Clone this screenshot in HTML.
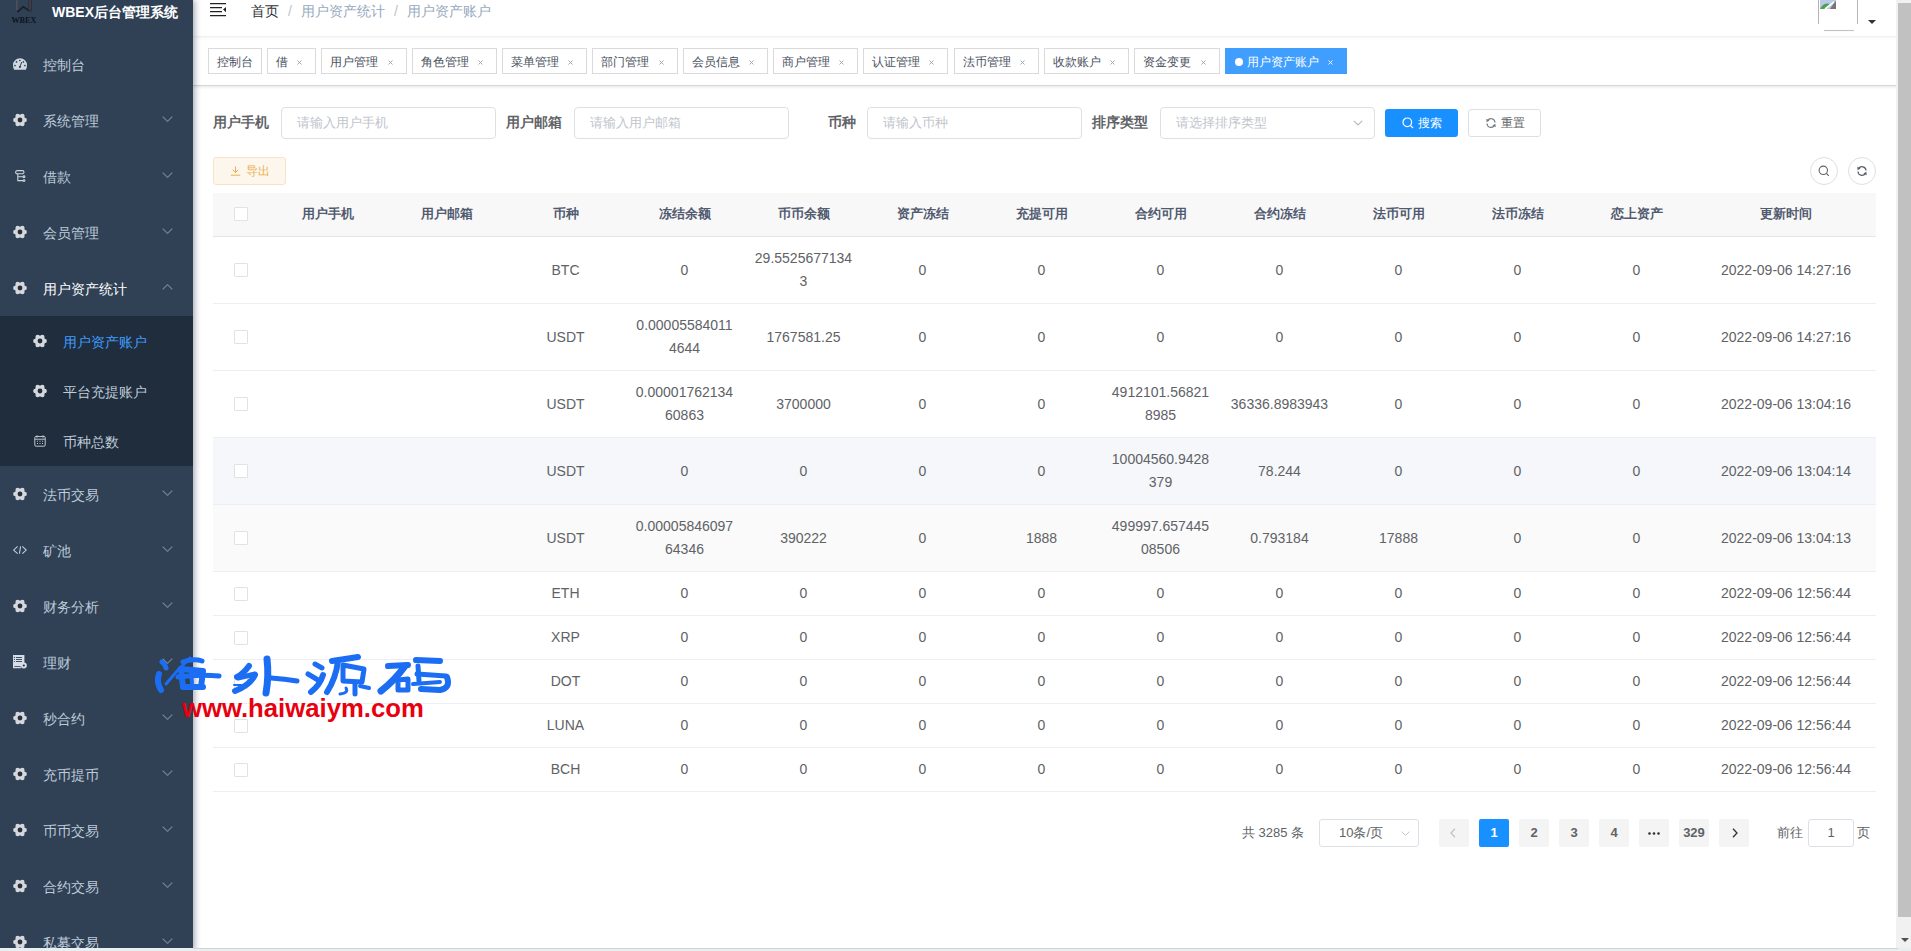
<!DOCTYPE html>
<html><head><meta charset="utf-8"><title>用户资产账户</title>
<style>
html,body{margin:0;padding:0;width:1911px;height:951px;overflow:hidden;background:#fff;font-family:"Liberation Sans", sans-serif}
*{box-sizing:content-box}
</style></head><body>
<div id="side" style="position:absolute;left:0;top:0;width:193px;height:951px;background:#304156;overflow:hidden;box-shadow:2px 0 6px rgba(0,21,41,.35);z-index:3"><svg style="position:absolute;left:10px;top:0" width="28" height="24" viewBox="0 0 28 24"><rect x="6" y="0" width="1.8" height="10" fill="#4a4e58"/><path d="M7.4 12.2 L13.3 6.8 L19.2 10.8" fill="none" stroke="#1a1e28" stroke-width="1.7"/><rect x="18.4" y="0" width="3.4" height="11.2" fill="#2b2b37"/><rect x="19.4" y="0" width="1.2" height="10" fill="#4a4650"/><text x="13.9" y="23.2" font-family="Liberation Serif" font-weight="bold" font-size="8.2" text-anchor="middle" fill="#0e1420" textLength="25" lengthAdjust="spacingAndGlyphs">WBEX</text></svg><div style="position:absolute;left:52px;top:2px;font-size:14px;font-weight:bold;color:#fff;line-height:20px;white-space:nowrap">WBEX后台管理系统</div><svg style="position:absolute;left:13px;top:58px" width="14" height="12" viewBox="0 0 14 12"><path d="M7 0.3 A7 7 0 0 0 0 7.3 Q0 10 1.2 11.7 H12.8 Q14 10 14 7.3 A7 7 0 0 0 7 0.3 Z" fill="#d0d8e2"/><g fill="#304156"><ellipse cx="2" cy="7.6" rx="0.9" ry="0.8"/><ellipse cx="3.5" cy="3.9" rx="0.8" ry="0.9"/><ellipse cx="6.9" cy="2.5" rx="0.9" ry="0.7"/><ellipse cx="10.4" cy="3.9" rx="0.8" ry="0.9"/><ellipse cx="11.9" cy="7.6" rx="0.9" ry="0.8"/><circle cx="6.9" cy="9" r="1.1"/></g><path d="M6.9 9 L8.7 4" stroke="#304156" stroke-width="1"/></svg><div style="position:absolute;left:43px;top:55px;line-height:20px;font-size:14px;color:#bfcbd9;white-space:nowrap">控制台</div><svg style="position:absolute;left:13px;top:113px" width="14" height="14" viewBox="0 0 14 14"><g fill="#d4d7dd"><circle cx="7" cy="7" r="5.3"/><circle cx="11.60" cy="7.00" r="2.3"/><circle cx="9.30" cy="10.98" r="2.3"/><circle cx="4.70" cy="10.98" r="2.3"/><circle cx="2.40" cy="7.00" r="2.3"/><circle cx="4.70" cy="3.02" r="2.3"/><circle cx="9.30" cy="3.02" r="2.3"/></g><circle cx="7" cy="7" r="2.4" fill="#2b2f3a"/></svg><div style="position:absolute;left:43px;top:111px;line-height:20px;font-size:14px;color:#bfcbd9;white-space:nowrap">系统管理</div><svg style="position:absolute;left:161.5px;top:115.5px" width="11" height="6" viewBox="0 0 11 6"><path d="M0.7 0.7 L5.5 5.3 L10.3 0.7" fill="none" stroke="#7d8793" stroke-width="1.1"/></svg><svg style="position:absolute;left:15px;top:170px" width="11" height="13" viewBox="0 0 11 13"><g fill="none" stroke="#cdd5df" stroke-width="1.1"><rect x="0.6" y="0.6" width="8.4" height="3.2" rx="1.6"/><path d="M2.8 3.8 V10.6 H8 M2.8 6.8 H8"/><circle cx="9" cy="6.8" r="0.9"/><circle cx="9" cy="10.6" r="0.9"/></g></svg><div style="position:absolute;left:43px;top:167px;line-height:20px;font-size:14px;color:#bfcbd9;white-space:nowrap">借款</div><svg style="position:absolute;left:161.5px;top:171.5px" width="11" height="6" viewBox="0 0 11 6"><path d="M0.7 0.7 L5.5 5.3 L10.3 0.7" fill="none" stroke="#7d8793" stroke-width="1.1"/></svg><svg style="position:absolute;left:13px;top:225px" width="14" height="14" viewBox="0 0 14 14"><g fill="#d4d7dd"><circle cx="7" cy="7" r="5.3"/><circle cx="11.60" cy="7.00" r="2.3"/><circle cx="9.30" cy="10.98" r="2.3"/><circle cx="4.70" cy="10.98" r="2.3"/><circle cx="2.40" cy="7.00" r="2.3"/><circle cx="4.70" cy="3.02" r="2.3"/><circle cx="9.30" cy="3.02" r="2.3"/></g><circle cx="7" cy="7" r="2.4" fill="#2b2f3a"/></svg><div style="position:absolute;left:43px;top:223px;line-height:20px;font-size:14px;color:#bfcbd9;white-space:nowrap">会员管理</div><svg style="position:absolute;left:161.5px;top:227.5px" width="11" height="6" viewBox="0 0 11 6"><path d="M0.7 0.7 L5.5 5.3 L10.3 0.7" fill="none" stroke="#7d8793" stroke-width="1.1"/></svg><svg style="position:absolute;left:13px;top:281px" width="14" height="14" viewBox="0 0 14 14"><g fill="#d4d7dd"><circle cx="7" cy="7" r="5.3"/><circle cx="11.60" cy="7.00" r="2.3"/><circle cx="9.30" cy="10.98" r="2.3"/><circle cx="4.70" cy="10.98" r="2.3"/><circle cx="2.40" cy="7.00" r="2.3"/><circle cx="4.70" cy="3.02" r="2.3"/><circle cx="9.30" cy="3.02" r="2.3"/></g><circle cx="7" cy="7" r="2.4" fill="#2b2f3a"/></svg><div style="position:absolute;left:43px;top:279px;line-height:20px;font-size:14px;color:#fff;white-space:nowrap">用户资产统计</div><svg style="position:absolute;left:161.5px;top:283.5px" width="11" height="6" viewBox="0 0 11 6"><path d="M0.7 5.3 L5.5 0.7 L10.3 5.3" fill="none" stroke="#7d8793" stroke-width="1.1"/></svg><div style="position:absolute;left:0;top:316px;width:193px;height:150px;background:#1f2d3d"></div><svg style="position:absolute;left:33px;top:334px" width="14" height="14" viewBox="0 0 14 14"><g fill="#d4d7dd"><circle cx="7" cy="7" r="5.3"/><circle cx="11.60" cy="7.00" r="2.3"/><circle cx="9.30" cy="10.98" r="2.3"/><circle cx="4.70" cy="10.98" r="2.3"/><circle cx="2.40" cy="7.00" r="2.3"/><circle cx="4.70" cy="3.02" r="2.3"/><circle cx="9.30" cy="3.02" r="2.3"/></g><circle cx="7" cy="7" r="2.4" fill="#1f2d3d"/></svg><div style="position:absolute;left:63px;top:332px;line-height:20px;font-size:14px;color:#409eff;white-space:nowrap">用户资产账户</div><svg style="position:absolute;left:33px;top:384px" width="14" height="14" viewBox="0 0 14 14"><g fill="#d4d7dd"><circle cx="7" cy="7" r="5.3"/><circle cx="11.60" cy="7.00" r="2.3"/><circle cx="9.30" cy="10.98" r="2.3"/><circle cx="4.70" cy="10.98" r="2.3"/><circle cx="2.40" cy="7.00" r="2.3"/><circle cx="4.70" cy="3.02" r="2.3"/><circle cx="9.30" cy="3.02" r="2.3"/></g><circle cx="7" cy="7" r="2.4" fill="#1f2d3d"/></svg><div style="position:absolute;left:63px;top:382px;line-height:20px;font-size:14px;color:#bfcbd9;white-space:nowrap">平台充提账户</div><svg style="position:absolute;left:34px;top:435px" width="12" height="12" viewBox="0 0 12 12"><rect x="0.8" y="1.5" width="10.4" height="9.7" rx="1" fill="none" stroke="#bfc5cf" stroke-width="1"/><path d="M0.8 4.2 h10.4 M3 0.3 v2.4 M9 0.3 v2.4" stroke="#bfc5cf" stroke-width="1"/><path d="M3 6.2 h1 M5.5 6.2 h1 M8 6.2 h1 M3 8.5 h1 M5.5 8.5 h1 M8 8.5 h1" stroke="#bfc5cf" stroke-width="1"/></svg><div style="position:absolute;left:63px;top:432px;line-height:20px;font-size:14px;color:#bfcbd9;white-space:nowrap">币种总数</div><svg style="position:absolute;left:13px;top:487px" width="14" height="14" viewBox="0 0 14 14"><g fill="#d4d7dd"><circle cx="7" cy="7" r="5.3"/><circle cx="11.60" cy="7.00" r="2.3"/><circle cx="9.30" cy="10.98" r="2.3"/><circle cx="4.70" cy="10.98" r="2.3"/><circle cx="2.40" cy="7.00" r="2.3"/><circle cx="4.70" cy="3.02" r="2.3"/><circle cx="9.30" cy="3.02" r="2.3"/></g><circle cx="7" cy="7" r="2.4" fill="#2b2f3a"/></svg><div style="position:absolute;left:43px;top:485px;line-height:20px;font-size:14px;color:#bfcbd9;white-space:nowrap">法币交易</div><svg style="position:absolute;left:161.5px;top:489.5px" width="11" height="6" viewBox="0 0 11 6"><path d="M0.7 0.7 L5.5 5.3 L10.3 0.7" fill="none" stroke="#7d8793" stroke-width="1.1"/></svg><svg style="position:absolute;left:13px;top:545px" width="14" height="10" viewBox="0 0 14 10"><path d="M4.6 1.3 L0.6 5.1 L4.6 8.7 M9.4 1.3 L13.2 5.1 L9.4 8.7 M7.6 1.3 L6.4 8.7" fill="none" stroke="#c3ccd8" stroke-width="1.1"/></svg><div style="position:absolute;left:43px;top:541px;line-height:20px;font-size:14px;color:#bfcbd9;white-space:nowrap">矿池</div><svg style="position:absolute;left:161.5px;top:545.5px" width="11" height="6" viewBox="0 0 11 6"><path d="M0.7 0.7 L5.5 5.3 L10.3 0.7" fill="none" stroke="#7d8793" stroke-width="1.1"/></svg><svg style="position:absolute;left:13px;top:599px" width="14" height="14" viewBox="0 0 14 14"><g fill="#d4d7dd"><circle cx="7" cy="7" r="5.3"/><circle cx="11.60" cy="7.00" r="2.3"/><circle cx="9.30" cy="10.98" r="2.3"/><circle cx="4.70" cy="10.98" r="2.3"/><circle cx="2.40" cy="7.00" r="2.3"/><circle cx="4.70" cy="3.02" r="2.3"/><circle cx="9.30" cy="3.02" r="2.3"/></g><circle cx="7" cy="7" r="2.4" fill="#2b2f3a"/></svg><div style="position:absolute;left:43px;top:597px;line-height:20px;font-size:14px;color:#bfcbd9;white-space:nowrap">财务分析</div><svg style="position:absolute;left:161.5px;top:601.5px" width="11" height="6" viewBox="0 0 11 6"><path d="M0.7 0.7 L5.5 5.3 L10.3 0.7" fill="none" stroke="#7d8793" stroke-width="1.1"/></svg><svg style="position:absolute;left:13px;top:655px" width="14" height="14" viewBox="0 0 14 14"><path d="M0 0 H11.4 V8.6 A3.4 3.4 0 0 0 8 13.2 H0 Z" fill="#d6dde6"/><g fill="#304156"><circle cx="1.4" cy="2.4" r="0.6"/><circle cx="1.4" cy="4.5" r="0.6"/><circle cx="1.4" cy="6.5" r="0.6"/><rect x="3" y="2" width="6" height="0.9"/><rect x="3" y="4.1" width="6" height="0.9"/><rect x="3" y="6.1" width="6" height="0.9"/><rect x="1.3" y="11" width="6.3" height="0.8"/></g><circle cx="10.8" cy="10.5" r="3" fill="#d6dde6"/><circle cx="10.8" cy="10.5" r="1.1" fill="#1f2d3d"/></svg><div style="position:absolute;left:43px;top:653px;line-height:20px;font-size:14px;color:#bfcbd9;white-space:nowrap">理财</div><svg style="position:absolute;left:161.5px;top:657.5px" width="11" height="6" viewBox="0 0 11 6"><path d="M0.7 0.7 L5.5 5.3 L10.3 0.7" fill="none" stroke="#7d8793" stroke-width="1.1"/></svg><svg style="position:absolute;left:13px;top:711px" width="14" height="14" viewBox="0 0 14 14"><g fill="#d4d7dd"><circle cx="7" cy="7" r="5.3"/><circle cx="11.60" cy="7.00" r="2.3"/><circle cx="9.30" cy="10.98" r="2.3"/><circle cx="4.70" cy="10.98" r="2.3"/><circle cx="2.40" cy="7.00" r="2.3"/><circle cx="4.70" cy="3.02" r="2.3"/><circle cx="9.30" cy="3.02" r="2.3"/></g><circle cx="7" cy="7" r="2.4" fill="#2b2f3a"/></svg><div style="position:absolute;left:43px;top:709px;line-height:20px;font-size:14px;color:#bfcbd9;white-space:nowrap">秒合约</div><svg style="position:absolute;left:161.5px;top:713.5px" width="11" height="6" viewBox="0 0 11 6"><path d="M0.7 0.7 L5.5 5.3 L10.3 0.7" fill="none" stroke="#7d8793" stroke-width="1.1"/></svg><svg style="position:absolute;left:13px;top:767px" width="14" height="14" viewBox="0 0 14 14"><g fill="#d4d7dd"><circle cx="7" cy="7" r="5.3"/><circle cx="11.60" cy="7.00" r="2.3"/><circle cx="9.30" cy="10.98" r="2.3"/><circle cx="4.70" cy="10.98" r="2.3"/><circle cx="2.40" cy="7.00" r="2.3"/><circle cx="4.70" cy="3.02" r="2.3"/><circle cx="9.30" cy="3.02" r="2.3"/></g><circle cx="7" cy="7" r="2.4" fill="#2b2f3a"/></svg><div style="position:absolute;left:43px;top:765px;line-height:20px;font-size:14px;color:#bfcbd9;white-space:nowrap">充币提币</div><svg style="position:absolute;left:161.5px;top:769.5px" width="11" height="6" viewBox="0 0 11 6"><path d="M0.7 0.7 L5.5 5.3 L10.3 0.7" fill="none" stroke="#7d8793" stroke-width="1.1"/></svg><svg style="position:absolute;left:13px;top:823px" width="14" height="14" viewBox="0 0 14 14"><g fill="#d4d7dd"><circle cx="7" cy="7" r="5.3"/><circle cx="11.60" cy="7.00" r="2.3"/><circle cx="9.30" cy="10.98" r="2.3"/><circle cx="4.70" cy="10.98" r="2.3"/><circle cx="2.40" cy="7.00" r="2.3"/><circle cx="4.70" cy="3.02" r="2.3"/><circle cx="9.30" cy="3.02" r="2.3"/></g><circle cx="7" cy="7" r="2.4" fill="#2b2f3a"/></svg><div style="position:absolute;left:43px;top:821px;line-height:20px;font-size:14px;color:#bfcbd9;white-space:nowrap">币币交易</div><svg style="position:absolute;left:161.5px;top:825.5px" width="11" height="6" viewBox="0 0 11 6"><path d="M0.7 0.7 L5.5 5.3 L10.3 0.7" fill="none" stroke="#7d8793" stroke-width="1.1"/></svg><svg style="position:absolute;left:13px;top:879px" width="14" height="14" viewBox="0 0 14 14"><g fill="#d4d7dd"><circle cx="7" cy="7" r="5.3"/><circle cx="11.60" cy="7.00" r="2.3"/><circle cx="9.30" cy="10.98" r="2.3"/><circle cx="4.70" cy="10.98" r="2.3"/><circle cx="2.40" cy="7.00" r="2.3"/><circle cx="4.70" cy="3.02" r="2.3"/><circle cx="9.30" cy="3.02" r="2.3"/></g><circle cx="7" cy="7" r="2.4" fill="#2b2f3a"/></svg><div style="position:absolute;left:43px;top:877px;line-height:20px;font-size:14px;color:#bfcbd9;white-space:nowrap">合约交易</div><svg style="position:absolute;left:161.5px;top:881.5px" width="11" height="6" viewBox="0 0 11 6"><path d="M0.7 0.7 L5.5 5.3 L10.3 0.7" fill="none" stroke="#7d8793" stroke-width="1.1"/></svg><svg style="position:absolute;left:13px;top:935px" width="14" height="14" viewBox="0 0 14 14"><g fill="#d4d7dd"><circle cx="7" cy="7" r="5.3"/><circle cx="11.60" cy="7.00" r="2.3"/><circle cx="9.30" cy="10.98" r="2.3"/><circle cx="4.70" cy="10.98" r="2.3"/><circle cx="2.40" cy="7.00" r="2.3"/><circle cx="4.70" cy="3.02" r="2.3"/><circle cx="9.30" cy="3.02" r="2.3"/></g><circle cx="7" cy="7" r="2.4" fill="#2b2f3a"/></svg><div style="position:absolute;left:43px;top:933px;line-height:20px;font-size:14px;color:#bfcbd9;white-space:nowrap">私募交易</div><svg style="position:absolute;left:161.5px;top:937.5px" width="11" height="6" viewBox="0 0 11 6"><path d="M0.7 0.7 L5.5 5.3 L10.3 0.7" fill="none" stroke="#7d8793" stroke-width="1.1"/></svg></div><div id="nav" style="position:absolute;left:193px;top:0;width:1705px;height:36px;background:#fff;box-shadow:0 1px 4px rgba(0,21,41,.08);z-index:2"></div><div style="position:absolute;left:0;top:0;width:1911px;height:36px;z-index:2"><svg style="position:absolute;left:210px;top:3px" width="16" height="14" viewBox="0 0 16 14"><path d="M0 0.6 H16 M0 4.6 H12 M0 8.6 H12 M0 12.6 H16" stroke="#222" stroke-width="1.3"/><path d="M16 4 L13 6.6 L16 9.2 Z" fill="#222"/></svg><div style="position:absolute;left:251px;top:1px;line-height:20px;font-size:14px;color:#303133;white-space:nowrap">首页<span style="color:#c0c4cc;margin:0 9px 0 9px">/</span><span style="color:#97a8be">用户资产统计</span><span style="color:#c0c4cc;margin:0 9px 0 9px">/</span><span style="color:#97a8be">用户资产账户</span></div><div style="position:absolute;left:1818px;top:0;width:1px;height:24px;background:#b4b4b4"></div><div style="position:absolute;left:1857px;top:0;width:1px;height:24px;background:#b4b4b4"></div><div style="position:absolute;left:1824px;top:30px;width:30px;height:1px;background:#c4c4c4;box-shadow:0 0 1px #ccc"></div><svg style="position:absolute;left:1820px;top:0" width="16" height="9" viewBox="0 0 16 9"><rect x="0" y="0" width="16" height="9" fill="#b9c9e6"/><path d="M0 9 Q4 2 10 4 L5 9 Z" fill="#4aa24a"/><path d="M5 9 L14 2" stroke="#fff" stroke-width="1.6"/><path d="M14 3 L16 1 L16 9 L10 9 Z" fill="#777"/></svg><div style="position:absolute;left:1868px;top:20px;width:0;height:0;border-left:4px solid transparent;border-right:4px solid transparent;border-top:4px solid #333"></div></div><div style="position:absolute;left:193px;top:37px;width:1705px;height:48px;background:#fff;border-bottom:1px solid #d6d6d6;box-shadow:0 1px 3px 0 rgba(0,0,0,.10);z-index:1"></div><div style="position:absolute;left:208px;top:48px;width:52px;height:24px;border:1px solid #dadada;background:#fff;z-index:2"><span style="position:absolute;left:8px;top:5px;line-height:16px;font-size:12px;color:#495060;white-space:nowrap">控制台</span></div><div style="position:absolute;left:267px;top:48px;width:47px;height:24px;border:1px solid #dadada;background:#fff;z-index:2"><span style="position:absolute;left:8px;top:5px;line-height:16px;font-size:12px;color:#495060;white-space:nowrap">借</span><svg style="position:absolute;left:29px;top:11px" width="5" height="5" viewBox="0 0 5 5"><path d="M0.5 0.5 L4.5 4.5 M4.5 0.5 L0.5 4.5" stroke="#9a9ea6" stroke-width="0.9"/></svg></div><div style="position:absolute;left:321px;top:48px;width:84px;height:24px;border:1px solid #dadada;background:#fff;z-index:2"><span style="position:absolute;left:8px;top:5px;line-height:16px;font-size:12px;color:#495060;white-space:nowrap">用户管理</span><svg style="position:absolute;left:66px;top:11px" width="5" height="5" viewBox="0 0 5 5"><path d="M0.5 0.5 L4.5 4.5 M4.5 0.5 L0.5 4.5" stroke="#9a9ea6" stroke-width="0.9"/></svg></div><div style="position:absolute;left:412px;top:48px;width:83px;height:24px;border:1px solid #dadada;background:#fff;z-index:2"><span style="position:absolute;left:8px;top:5px;line-height:16px;font-size:12px;color:#495060;white-space:nowrap">角色管理</span><svg style="position:absolute;left:65px;top:11px" width="5" height="5" viewBox="0 0 5 5"><path d="M0.5 0.5 L4.5 4.5 M4.5 0.5 L0.5 4.5" stroke="#9a9ea6" stroke-width="0.9"/></svg></div><div style="position:absolute;left:502px;top:48px;width:83px;height:24px;border:1px solid #dadada;background:#fff;z-index:2"><span style="position:absolute;left:8px;top:5px;line-height:16px;font-size:12px;color:#495060;white-space:nowrap">菜单管理</span><svg style="position:absolute;left:65px;top:11px" width="5" height="5" viewBox="0 0 5 5"><path d="M0.5 0.5 L4.5 4.5 M4.5 0.5 L0.5 4.5" stroke="#9a9ea6" stroke-width="0.9"/></svg></div><div style="position:absolute;left:592px;top:48px;width:84px;height:24px;border:1px solid #dadada;background:#fff;z-index:2"><span style="position:absolute;left:8px;top:5px;line-height:16px;font-size:12px;color:#495060;white-space:nowrap">部门管理</span><svg style="position:absolute;left:66px;top:11px" width="5" height="5" viewBox="0 0 5 5"><path d="M0.5 0.5 L4.5 4.5 M4.5 0.5 L0.5 4.5" stroke="#9a9ea6" stroke-width="0.9"/></svg></div><div style="position:absolute;left:683px;top:48px;width:83px;height:24px;border:1px solid #dadada;background:#fff;z-index:2"><span style="position:absolute;left:8px;top:5px;line-height:16px;font-size:12px;color:#495060;white-space:nowrap">会员信息</span><svg style="position:absolute;left:65px;top:11px" width="5" height="5" viewBox="0 0 5 5"><path d="M0.5 0.5 L4.5 4.5 M4.5 0.5 L0.5 4.5" stroke="#9a9ea6" stroke-width="0.9"/></svg></div><div style="position:absolute;left:773px;top:48px;width:83px;height:24px;border:1px solid #dadada;background:#fff;z-index:2"><span style="position:absolute;left:8px;top:5px;line-height:16px;font-size:12px;color:#495060;white-space:nowrap">商户管理</span><svg style="position:absolute;left:65px;top:11px" width="5" height="5" viewBox="0 0 5 5"><path d="M0.5 0.5 L4.5 4.5 M4.5 0.5 L0.5 4.5" stroke="#9a9ea6" stroke-width="0.9"/></svg></div><div style="position:absolute;left:863px;top:48px;width:83px;height:24px;border:1px solid #dadada;background:#fff;z-index:2"><span style="position:absolute;left:8px;top:5px;line-height:16px;font-size:12px;color:#495060;white-space:nowrap">认证管理</span><svg style="position:absolute;left:65px;top:11px" width="5" height="5" viewBox="0 0 5 5"><path d="M0.5 0.5 L4.5 4.5 M4.5 0.5 L0.5 4.5" stroke="#9a9ea6" stroke-width="0.9"/></svg></div><div style="position:absolute;left:954px;top:48px;width:83px;height:24px;border:1px solid #dadada;background:#fff;z-index:2"><span style="position:absolute;left:8px;top:5px;line-height:16px;font-size:12px;color:#495060;white-space:nowrap">法币管理</span><svg style="position:absolute;left:65px;top:11px" width="5" height="5" viewBox="0 0 5 5"><path d="M0.5 0.5 L4.5 4.5 M4.5 0.5 L0.5 4.5" stroke="#9a9ea6" stroke-width="0.9"/></svg></div><div style="position:absolute;left:1044px;top:48px;width:83px;height:24px;border:1px solid #dadada;background:#fff;z-index:2"><span style="position:absolute;left:8px;top:5px;line-height:16px;font-size:12px;color:#495060;white-space:nowrap">收款账户</span><svg style="position:absolute;left:65px;top:11px" width="5" height="5" viewBox="0 0 5 5"><path d="M0.5 0.5 L4.5 4.5 M4.5 0.5 L0.5 4.5" stroke="#9a9ea6" stroke-width="0.9"/></svg></div><div style="position:absolute;left:1134px;top:48px;width:84px;height:24px;border:1px solid #dadada;background:#fff;z-index:2"><span style="position:absolute;left:8px;top:5px;line-height:16px;font-size:12px;color:#495060;white-space:nowrap">资金变更</span><svg style="position:absolute;left:66px;top:11px" width="5" height="5" viewBox="0 0 5 5"><path d="M0.5 0.5 L4.5 4.5 M4.5 0.5 L0.5 4.5" stroke="#9a9ea6" stroke-width="0.9"/></svg></div><div style="position:absolute;left:1225px;top:48px;width:120px;height:24px;border:1px solid #409eff;background:#409eff;z-index:2"><span style="position:absolute;left:9px;top:9px;width:8px;height:8px;border-radius:50%;background:#fff"></span><span style="position:absolute;left:21px;top:5px;line-height:16px;font-size:12px;color:#fff;white-space:nowrap">用户资产账户</span><svg style="position:absolute;left:102px;top:11px" width="5" height="5" viewBox="0 0 5 5"><path d="M0.5 0.5 L4.5 4.5 M4.5 0.5 L0.5 4.5" stroke="#fff" stroke-width="0.9"/></svg></div><div style="position:absolute;left:209px;top:112px;width:60px;text-align:right;line-height:20px;font-size:14px;font-weight:bold;color:#606266;white-space:nowrap">用户手机</div><div style="position:absolute;left:502px;top:112px;width:60px;text-align:right;line-height:20px;font-size:14px;font-weight:bold;color:#606266;white-space:nowrap">用户邮箱</div><div style="position:absolute;left:796px;top:112px;width:60px;text-align:right;line-height:20px;font-size:14px;font-weight:bold;color:#606266;white-space:nowrap">币种</div><div style="position:absolute;left:1088px;top:112px;width:60px;text-align:right;line-height:20px;font-size:14px;font-weight:bold;color:#606266;white-space:nowrap">排序类型</div><div style="position:absolute;left:281px;top:107px;width:213px;height:30px;border:1px solid #dcdfe6;border-radius:4px;background:#fff"><span style="position:absolute;left:15px;top:6px;line-height:18px;font-size:13px;color:#c0c4cc;white-space:nowrap">请输入用户手机</span></div><div style="position:absolute;left:574px;top:107px;width:213px;height:30px;border:1px solid #dcdfe6;border-radius:4px;background:#fff"><span style="position:absolute;left:15px;top:6px;line-height:18px;font-size:13px;color:#c0c4cc;white-space:nowrap">请输入用户邮箱</span></div><div style="position:absolute;left:867px;top:107px;width:213px;height:30px;border:1px solid #dcdfe6;border-radius:4px;background:#fff"><span style="position:absolute;left:15px;top:6px;line-height:18px;font-size:13px;color:#c0c4cc;white-space:nowrap">请输入币种</span></div><div style="position:absolute;left:1160px;top:107px;width:213px;height:30px;border:1px solid #dcdfe6;border-radius:4px;background:#fff"><span style="position:absolute;left:15px;top:6px;line-height:18px;font-size:13px;color:#c0c4cc;white-space:nowrap">请选择排序类型</span><svg style="position:absolute;left:192px;top:12px" width="10" height="6" viewBox="0 0 10 6"><path d="M0.8 0.8 L5 5 L9.2 0.8" fill="none" stroke="#b4b8bf" stroke-width="1.1"/></svg></div><div style="position:absolute;left:1385px;top:109px;width:73px;height:28px;background:#1890ff;border-radius:3px"><svg style="position:absolute;left:17px;top:8px" width="12" height="12" viewBox="0 0 12 12"><circle cx="5.3" cy="5.3" r="4.3" fill="none" stroke="#fff" stroke-width="1.2"/><path d="M8.4 8.4 L11 11" stroke="#fff" stroke-width="1.2"/></svg><span style="position:absolute;left:33px;top:6px;line-height:16px;font-size:12px;color:#fff">搜索</span></div><div style="position:absolute;left:1468px;top:109px;width:71px;height:26px;border:1px solid #dcdfe6;background:#fff;border-radius:3px"><svg style="position:absolute;left:17px;top:8px" width="10" height="10" viewBox="0 0 10 10"><path d="M1.6 2.6 A4 4 0 0 1 9 4.6 M8.4 7.4 A4 4 0 0 1 1 5.4" fill="none" stroke="#777b82" stroke-width="1.1"/><path d="M0.3 0.8 L0.6 4.2 L3.6 2.6 Z M9.7 9.2 L9.4 5.8 L6.4 7.4 Z" fill="#777b82"/></svg><span style="position:absolute;left:32px;top:5px;line-height:16px;font-size:12px;color:#606266">重置</span></div><div style="position:absolute;left:213px;top:157px;width:71px;height:26px;border:1px solid #f8e3c5;background:#fdf6ec;border-radius:3px"><svg style="position:absolute;left:16px;top:8px" width="11" height="10" viewBox="0 0 11 10"><path d="M5.5 0.5 V6.5 M2.8 3.8 L5.5 6.5 L8.2 3.8 M0.8 9.2 H10.2" fill="none" stroke="#eab04f" stroke-width="1"/></svg><span style="position:absolute;left:32px;top:5px;line-height:16px;font-size:12px;color:#eab04f">导出</span></div><div style="position:absolute;left:1810px;top:157px;width:26px;height:26px;border:1px solid #dedfe2;border-radius:50%;background:#fff"><svg style="position:absolute;left:7px;top:7px" width="12" height="12" viewBox="0 0 12 12"><circle cx="5.3" cy="5.3" r="4.2" fill="none" stroke="#606266" stroke-width="1.1"/><path d="M8.4 8.4 L10.8 10.8" stroke="#606266" stroke-width="1.1"/></svg></div><div style="position:absolute;left:1848px;top:157px;width:26px;height:26px;border:1px solid #dedfe2;border-radius:50%;background:#fff"><svg style="position:absolute;left:7.5px;top:8px" width="10" height="10" viewBox="0 0 10 10"><path d="M1.6 2.6 A4 4 0 0 1 9 4.6 M8.4 7.4 A4 4 0 0 1 1 5.4" fill="none" stroke="#5a5e66" stroke-width="1.2"/><path d="M0.3 0.8 L0.6 4.2 L3.6 2.6 Z M9.7 9.2 L9.4 5.8 L6.4 7.4 Z" fill="#5a5e66"/></svg></div><div style="position:absolute;left:213px;top:193px;width:1663px;height:43px;background:#f8f8f9;border-bottom:1px solid #dfe6ec"></div><div style="position:absolute;left:234px;top:207px;width:12px;height:12px;border:1px solid #dfe2e7;border-radius:1px;background:#fff"></div><div style="position:absolute;left:268px;top:204px;width:119px;text-align:center;line-height:20px;font-size:13px;font-weight:bold;color:#515a6e;white-space:nowrap">用户手机</div><div style="position:absolute;left:387px;top:204px;width:119px;text-align:center;line-height:20px;font-size:13px;font-weight:bold;color:#515a6e;white-space:nowrap">用户邮箱</div><div style="position:absolute;left:506px;top:204px;width:119px;text-align:center;line-height:20px;font-size:13px;font-weight:bold;color:#515a6e;white-space:nowrap">币种</div><div style="position:absolute;left:625px;top:204px;width:119px;text-align:center;line-height:20px;font-size:13px;font-weight:bold;color:#515a6e;white-space:nowrap">冻结余额</div><div style="position:absolute;left:744px;top:204px;width:119px;text-align:center;line-height:20px;font-size:13px;font-weight:bold;color:#515a6e;white-space:nowrap">币币余额</div><div style="position:absolute;left:863px;top:204px;width:119px;text-align:center;line-height:20px;font-size:13px;font-weight:bold;color:#515a6e;white-space:nowrap">资产冻结</div><div style="position:absolute;left:982px;top:204px;width:119px;text-align:center;line-height:20px;font-size:13px;font-weight:bold;color:#515a6e;white-space:nowrap">充提可用</div><div style="position:absolute;left:1101px;top:204px;width:119px;text-align:center;line-height:20px;font-size:13px;font-weight:bold;color:#515a6e;white-space:nowrap">合约可用</div><div style="position:absolute;left:1220px;top:204px;width:119px;text-align:center;line-height:20px;font-size:13px;font-weight:bold;color:#515a6e;white-space:nowrap">合约冻结</div><div style="position:absolute;left:1339px;top:204px;width:119px;text-align:center;line-height:20px;font-size:13px;font-weight:bold;color:#515a6e;white-space:nowrap">法币可用</div><div style="position:absolute;left:1458px;top:204px;width:119px;text-align:center;line-height:20px;font-size:13px;font-weight:bold;color:#515a6e;white-space:nowrap">法币冻结</div><div style="position:absolute;left:1577px;top:204px;width:119px;text-align:center;line-height:20px;font-size:13px;font-weight:bold;color:#515a6e;white-space:nowrap">恋上资产</div><div style="position:absolute;left:1696px;top:204px;width:180px;text-align:center;line-height:20px;font-size:13px;font-weight:bold;color:#515a6e;white-space:nowrap">更新时间</div><div style="position:absolute;left:213px;top:237px;width:1663px;height:66px;background:#fff;border-bottom:1px solid #ebeef5"></div><div style="position:absolute;left:234px;top:263px;width:12px;height:12px;border:1px solid #dfe2e7;border-radius:1px;background:#fff"></div><div style="position:absolute;left:516px;top:237px;width:99px;height:66px;display:flex;align-items:center;justify-content:center"><div style="text-align:center;line-height:23px;font-size:14px;color:#606266;word-break:break-all">BTC</div></div><div style="position:absolute;left:635px;top:237px;width:99px;height:66px;display:flex;align-items:center;justify-content:center"><div style="text-align:center;line-height:23px;font-size:14px;color:#606266;word-break:break-all">0</div></div><div style="position:absolute;left:754px;top:237px;width:99px;height:66px;display:flex;align-items:center;justify-content:center"><div style="text-align:center;line-height:23px;font-size:14px;color:#606266;word-break:break-all">29.55256771343</div></div><div style="position:absolute;left:873px;top:237px;width:99px;height:66px;display:flex;align-items:center;justify-content:center"><div style="text-align:center;line-height:23px;font-size:14px;color:#606266;word-break:break-all">0</div></div><div style="position:absolute;left:992px;top:237px;width:99px;height:66px;display:flex;align-items:center;justify-content:center"><div style="text-align:center;line-height:23px;font-size:14px;color:#606266;word-break:break-all">0</div></div><div style="position:absolute;left:1111px;top:237px;width:99px;height:66px;display:flex;align-items:center;justify-content:center"><div style="text-align:center;line-height:23px;font-size:14px;color:#606266;word-break:break-all">0</div></div><div style="position:absolute;left:1230px;top:237px;width:99px;height:66px;display:flex;align-items:center;justify-content:center"><div style="text-align:center;line-height:23px;font-size:14px;color:#606266;word-break:break-all">0</div></div><div style="position:absolute;left:1349px;top:237px;width:99px;height:66px;display:flex;align-items:center;justify-content:center"><div style="text-align:center;line-height:23px;font-size:14px;color:#606266;word-break:break-all">0</div></div><div style="position:absolute;left:1468px;top:237px;width:99px;height:66px;display:flex;align-items:center;justify-content:center"><div style="text-align:center;line-height:23px;font-size:14px;color:#606266;word-break:break-all">0</div></div><div style="position:absolute;left:1587px;top:237px;width:99px;height:66px;display:flex;align-items:center;justify-content:center"><div style="text-align:center;line-height:23px;font-size:14px;color:#606266;word-break:break-all">0</div></div><div style="position:absolute;left:1706px;top:237px;width:160px;height:66px;display:flex;align-items:center;justify-content:center"><div style="text-align:center;line-height:23px;font-size:14px;color:#606266;word-break:break-all">2022-09-06 14:27:16</div></div><div style="position:absolute;left:213px;top:304px;width:1663px;height:66px;background:#fff;border-bottom:1px solid #ebeef5"></div><div style="position:absolute;left:234px;top:330px;width:12px;height:12px;border:1px solid #dfe2e7;border-radius:1px;background:#fff"></div><div style="position:absolute;left:516px;top:304px;width:99px;height:66px;display:flex;align-items:center;justify-content:center"><div style="text-align:center;line-height:23px;font-size:14px;color:#606266;word-break:break-all">USDT</div></div><div style="position:absolute;left:635px;top:304px;width:99px;height:66px;display:flex;align-items:center;justify-content:center"><div style="text-align:center;line-height:23px;font-size:14px;color:#606266;word-break:break-all">0.000055840114644</div></div><div style="position:absolute;left:754px;top:304px;width:99px;height:66px;display:flex;align-items:center;justify-content:center"><div style="text-align:center;line-height:23px;font-size:14px;color:#606266;word-break:break-all">1767581.25</div></div><div style="position:absolute;left:873px;top:304px;width:99px;height:66px;display:flex;align-items:center;justify-content:center"><div style="text-align:center;line-height:23px;font-size:14px;color:#606266;word-break:break-all">0</div></div><div style="position:absolute;left:992px;top:304px;width:99px;height:66px;display:flex;align-items:center;justify-content:center"><div style="text-align:center;line-height:23px;font-size:14px;color:#606266;word-break:break-all">0</div></div><div style="position:absolute;left:1111px;top:304px;width:99px;height:66px;display:flex;align-items:center;justify-content:center"><div style="text-align:center;line-height:23px;font-size:14px;color:#606266;word-break:break-all">0</div></div><div style="position:absolute;left:1230px;top:304px;width:99px;height:66px;display:flex;align-items:center;justify-content:center"><div style="text-align:center;line-height:23px;font-size:14px;color:#606266;word-break:break-all">0</div></div><div style="position:absolute;left:1349px;top:304px;width:99px;height:66px;display:flex;align-items:center;justify-content:center"><div style="text-align:center;line-height:23px;font-size:14px;color:#606266;word-break:break-all">0</div></div><div style="position:absolute;left:1468px;top:304px;width:99px;height:66px;display:flex;align-items:center;justify-content:center"><div style="text-align:center;line-height:23px;font-size:14px;color:#606266;word-break:break-all">0</div></div><div style="position:absolute;left:1587px;top:304px;width:99px;height:66px;display:flex;align-items:center;justify-content:center"><div style="text-align:center;line-height:23px;font-size:14px;color:#606266;word-break:break-all">0</div></div><div style="position:absolute;left:1706px;top:304px;width:160px;height:66px;display:flex;align-items:center;justify-content:center"><div style="text-align:center;line-height:23px;font-size:14px;color:#606266;word-break:break-all">2022-09-06 14:27:16</div></div><div style="position:absolute;left:213px;top:371px;width:1663px;height:66px;background:#fff;border-bottom:1px solid #ebeef5"></div><div style="position:absolute;left:234px;top:397px;width:12px;height:12px;border:1px solid #dfe2e7;border-radius:1px;background:#fff"></div><div style="position:absolute;left:516px;top:371px;width:99px;height:66px;display:flex;align-items:center;justify-content:center"><div style="text-align:center;line-height:23px;font-size:14px;color:#606266;word-break:break-all">USDT</div></div><div style="position:absolute;left:635px;top:371px;width:99px;height:66px;display:flex;align-items:center;justify-content:center"><div style="text-align:center;line-height:23px;font-size:14px;color:#606266;word-break:break-all">0.0000176213460863</div></div><div style="position:absolute;left:754px;top:371px;width:99px;height:66px;display:flex;align-items:center;justify-content:center"><div style="text-align:center;line-height:23px;font-size:14px;color:#606266;word-break:break-all">3700000</div></div><div style="position:absolute;left:873px;top:371px;width:99px;height:66px;display:flex;align-items:center;justify-content:center"><div style="text-align:center;line-height:23px;font-size:14px;color:#606266;word-break:break-all">0</div></div><div style="position:absolute;left:992px;top:371px;width:99px;height:66px;display:flex;align-items:center;justify-content:center"><div style="text-align:center;line-height:23px;font-size:14px;color:#606266;word-break:break-all">0</div></div><div style="position:absolute;left:1111px;top:371px;width:99px;height:66px;display:flex;align-items:center;justify-content:center"><div style="text-align:center;line-height:23px;font-size:14px;color:#606266;word-break:break-all">4912101.568218985</div></div><div style="position:absolute;left:1230px;top:371px;width:99px;height:66px;display:flex;align-items:center;justify-content:center"><div style="text-align:center;line-height:23px;font-size:14px;color:#606266;word-break:break-all">36336.8983943</div></div><div style="position:absolute;left:1349px;top:371px;width:99px;height:66px;display:flex;align-items:center;justify-content:center"><div style="text-align:center;line-height:23px;font-size:14px;color:#606266;word-break:break-all">0</div></div><div style="position:absolute;left:1468px;top:371px;width:99px;height:66px;display:flex;align-items:center;justify-content:center"><div style="text-align:center;line-height:23px;font-size:14px;color:#606266;word-break:break-all">0</div></div><div style="position:absolute;left:1587px;top:371px;width:99px;height:66px;display:flex;align-items:center;justify-content:center"><div style="text-align:center;line-height:23px;font-size:14px;color:#606266;word-break:break-all">0</div></div><div style="position:absolute;left:1706px;top:371px;width:160px;height:66px;display:flex;align-items:center;justify-content:center"><div style="text-align:center;line-height:23px;font-size:14px;color:#606266;word-break:break-all">2022-09-06 13:04:16</div></div><div style="position:absolute;left:213px;top:438px;width:1663px;height:66px;background:#f5f7fa;border-bottom:1px solid #ebeef5"></div><div style="position:absolute;left:234px;top:464px;width:12px;height:12px;border:1px solid #dfe2e7;border-radius:1px;background:#fff"></div><div style="position:absolute;left:516px;top:438px;width:99px;height:66px;display:flex;align-items:center;justify-content:center"><div style="text-align:center;line-height:23px;font-size:14px;color:#606266;word-break:break-all">USDT</div></div><div style="position:absolute;left:635px;top:438px;width:99px;height:66px;display:flex;align-items:center;justify-content:center"><div style="text-align:center;line-height:23px;font-size:14px;color:#606266;word-break:break-all">0</div></div><div style="position:absolute;left:754px;top:438px;width:99px;height:66px;display:flex;align-items:center;justify-content:center"><div style="text-align:center;line-height:23px;font-size:14px;color:#606266;word-break:break-all">0</div></div><div style="position:absolute;left:873px;top:438px;width:99px;height:66px;display:flex;align-items:center;justify-content:center"><div style="text-align:center;line-height:23px;font-size:14px;color:#606266;word-break:break-all">0</div></div><div style="position:absolute;left:992px;top:438px;width:99px;height:66px;display:flex;align-items:center;justify-content:center"><div style="text-align:center;line-height:23px;font-size:14px;color:#606266;word-break:break-all">0</div></div><div style="position:absolute;left:1111px;top:438px;width:99px;height:66px;display:flex;align-items:center;justify-content:center"><div style="text-align:center;line-height:23px;font-size:14px;color:#606266;word-break:break-all">10004560.9428379</div></div><div style="position:absolute;left:1230px;top:438px;width:99px;height:66px;display:flex;align-items:center;justify-content:center"><div style="text-align:center;line-height:23px;font-size:14px;color:#606266;word-break:break-all">78.244</div></div><div style="position:absolute;left:1349px;top:438px;width:99px;height:66px;display:flex;align-items:center;justify-content:center"><div style="text-align:center;line-height:23px;font-size:14px;color:#606266;word-break:break-all">0</div></div><div style="position:absolute;left:1468px;top:438px;width:99px;height:66px;display:flex;align-items:center;justify-content:center"><div style="text-align:center;line-height:23px;font-size:14px;color:#606266;word-break:break-all">0</div></div><div style="position:absolute;left:1587px;top:438px;width:99px;height:66px;display:flex;align-items:center;justify-content:center"><div style="text-align:center;line-height:23px;font-size:14px;color:#606266;word-break:break-all">0</div></div><div style="position:absolute;left:1706px;top:438px;width:160px;height:66px;display:flex;align-items:center;justify-content:center"><div style="text-align:center;line-height:23px;font-size:14px;color:#606266;word-break:break-all">2022-09-06 13:04:14</div></div><div style="position:absolute;left:213px;top:505px;width:1663px;height:66px;background:#fafafa;border-bottom:1px solid #ebeef5"></div><div style="position:absolute;left:234px;top:531px;width:12px;height:12px;border:1px solid #dfe2e7;border-radius:1px;background:#fff"></div><div style="position:absolute;left:516px;top:505px;width:99px;height:66px;display:flex;align-items:center;justify-content:center"><div style="text-align:center;line-height:23px;font-size:14px;color:#606266;word-break:break-all">USDT</div></div><div style="position:absolute;left:635px;top:505px;width:99px;height:66px;display:flex;align-items:center;justify-content:center"><div style="text-align:center;line-height:23px;font-size:14px;color:#606266;word-break:break-all">0.0000584609764346</div></div><div style="position:absolute;left:754px;top:505px;width:99px;height:66px;display:flex;align-items:center;justify-content:center"><div style="text-align:center;line-height:23px;font-size:14px;color:#606266;word-break:break-all">390222</div></div><div style="position:absolute;left:873px;top:505px;width:99px;height:66px;display:flex;align-items:center;justify-content:center"><div style="text-align:center;line-height:23px;font-size:14px;color:#606266;word-break:break-all">0</div></div><div style="position:absolute;left:992px;top:505px;width:99px;height:66px;display:flex;align-items:center;justify-content:center"><div style="text-align:center;line-height:23px;font-size:14px;color:#606266;word-break:break-all">1888</div></div><div style="position:absolute;left:1111px;top:505px;width:99px;height:66px;display:flex;align-items:center;justify-content:center"><div style="text-align:center;line-height:23px;font-size:14px;color:#606266;word-break:break-all">499997.65744508506</div></div><div style="position:absolute;left:1230px;top:505px;width:99px;height:66px;display:flex;align-items:center;justify-content:center"><div style="text-align:center;line-height:23px;font-size:14px;color:#606266;word-break:break-all">0.793184</div></div><div style="position:absolute;left:1349px;top:505px;width:99px;height:66px;display:flex;align-items:center;justify-content:center"><div style="text-align:center;line-height:23px;font-size:14px;color:#606266;word-break:break-all">17888</div></div><div style="position:absolute;left:1468px;top:505px;width:99px;height:66px;display:flex;align-items:center;justify-content:center"><div style="text-align:center;line-height:23px;font-size:14px;color:#606266;word-break:break-all">0</div></div><div style="position:absolute;left:1587px;top:505px;width:99px;height:66px;display:flex;align-items:center;justify-content:center"><div style="text-align:center;line-height:23px;font-size:14px;color:#606266;word-break:break-all">0</div></div><div style="position:absolute;left:1706px;top:505px;width:160px;height:66px;display:flex;align-items:center;justify-content:center"><div style="text-align:center;line-height:23px;font-size:14px;color:#606266;word-break:break-all">2022-09-06 13:04:13</div></div><div style="position:absolute;left:213px;top:572px;width:1663px;height:43px;background:#fff;border-bottom:1px solid #ebeef5"></div><div style="position:absolute;left:234px;top:587px;width:12px;height:12px;border:1px solid #dfe2e7;border-radius:1px;background:#fff"></div><div style="position:absolute;left:516px;top:572px;width:99px;height:43px;display:flex;align-items:center;justify-content:center"><div style="text-align:center;line-height:23px;font-size:14px;color:#606266;word-break:break-all">ETH</div></div><div style="position:absolute;left:635px;top:572px;width:99px;height:43px;display:flex;align-items:center;justify-content:center"><div style="text-align:center;line-height:23px;font-size:14px;color:#606266;word-break:break-all">0</div></div><div style="position:absolute;left:754px;top:572px;width:99px;height:43px;display:flex;align-items:center;justify-content:center"><div style="text-align:center;line-height:23px;font-size:14px;color:#606266;word-break:break-all">0</div></div><div style="position:absolute;left:873px;top:572px;width:99px;height:43px;display:flex;align-items:center;justify-content:center"><div style="text-align:center;line-height:23px;font-size:14px;color:#606266;word-break:break-all">0</div></div><div style="position:absolute;left:992px;top:572px;width:99px;height:43px;display:flex;align-items:center;justify-content:center"><div style="text-align:center;line-height:23px;font-size:14px;color:#606266;word-break:break-all">0</div></div><div style="position:absolute;left:1111px;top:572px;width:99px;height:43px;display:flex;align-items:center;justify-content:center"><div style="text-align:center;line-height:23px;font-size:14px;color:#606266;word-break:break-all">0</div></div><div style="position:absolute;left:1230px;top:572px;width:99px;height:43px;display:flex;align-items:center;justify-content:center"><div style="text-align:center;line-height:23px;font-size:14px;color:#606266;word-break:break-all">0</div></div><div style="position:absolute;left:1349px;top:572px;width:99px;height:43px;display:flex;align-items:center;justify-content:center"><div style="text-align:center;line-height:23px;font-size:14px;color:#606266;word-break:break-all">0</div></div><div style="position:absolute;left:1468px;top:572px;width:99px;height:43px;display:flex;align-items:center;justify-content:center"><div style="text-align:center;line-height:23px;font-size:14px;color:#606266;word-break:break-all">0</div></div><div style="position:absolute;left:1587px;top:572px;width:99px;height:43px;display:flex;align-items:center;justify-content:center"><div style="text-align:center;line-height:23px;font-size:14px;color:#606266;word-break:break-all">0</div></div><div style="position:absolute;left:1706px;top:572px;width:160px;height:43px;display:flex;align-items:center;justify-content:center"><div style="text-align:center;line-height:23px;font-size:14px;color:#606266;word-break:break-all">2022-09-06 12:56:44</div></div><div style="position:absolute;left:213px;top:616px;width:1663px;height:43px;background:#fff;border-bottom:1px solid #ebeef5"></div><div style="position:absolute;left:234px;top:631px;width:12px;height:12px;border:1px solid #dfe2e7;border-radius:1px;background:#fff"></div><div style="position:absolute;left:516px;top:616px;width:99px;height:43px;display:flex;align-items:center;justify-content:center"><div style="text-align:center;line-height:23px;font-size:14px;color:#606266;word-break:break-all">XRP</div></div><div style="position:absolute;left:635px;top:616px;width:99px;height:43px;display:flex;align-items:center;justify-content:center"><div style="text-align:center;line-height:23px;font-size:14px;color:#606266;word-break:break-all">0</div></div><div style="position:absolute;left:754px;top:616px;width:99px;height:43px;display:flex;align-items:center;justify-content:center"><div style="text-align:center;line-height:23px;font-size:14px;color:#606266;word-break:break-all">0</div></div><div style="position:absolute;left:873px;top:616px;width:99px;height:43px;display:flex;align-items:center;justify-content:center"><div style="text-align:center;line-height:23px;font-size:14px;color:#606266;word-break:break-all">0</div></div><div style="position:absolute;left:992px;top:616px;width:99px;height:43px;display:flex;align-items:center;justify-content:center"><div style="text-align:center;line-height:23px;font-size:14px;color:#606266;word-break:break-all">0</div></div><div style="position:absolute;left:1111px;top:616px;width:99px;height:43px;display:flex;align-items:center;justify-content:center"><div style="text-align:center;line-height:23px;font-size:14px;color:#606266;word-break:break-all">0</div></div><div style="position:absolute;left:1230px;top:616px;width:99px;height:43px;display:flex;align-items:center;justify-content:center"><div style="text-align:center;line-height:23px;font-size:14px;color:#606266;word-break:break-all">0</div></div><div style="position:absolute;left:1349px;top:616px;width:99px;height:43px;display:flex;align-items:center;justify-content:center"><div style="text-align:center;line-height:23px;font-size:14px;color:#606266;word-break:break-all">0</div></div><div style="position:absolute;left:1468px;top:616px;width:99px;height:43px;display:flex;align-items:center;justify-content:center"><div style="text-align:center;line-height:23px;font-size:14px;color:#606266;word-break:break-all">0</div></div><div style="position:absolute;left:1587px;top:616px;width:99px;height:43px;display:flex;align-items:center;justify-content:center"><div style="text-align:center;line-height:23px;font-size:14px;color:#606266;word-break:break-all">0</div></div><div style="position:absolute;left:1706px;top:616px;width:160px;height:43px;display:flex;align-items:center;justify-content:center"><div style="text-align:center;line-height:23px;font-size:14px;color:#606266;word-break:break-all">2022-09-06 12:56:44</div></div><div style="position:absolute;left:213px;top:660px;width:1663px;height:43px;background:#fff;border-bottom:1px solid #ebeef5"></div><div style="position:absolute;left:234px;top:675px;width:12px;height:12px;border:1px solid #dfe2e7;border-radius:1px;background:#fff"></div><div style="position:absolute;left:516px;top:660px;width:99px;height:43px;display:flex;align-items:center;justify-content:center"><div style="text-align:center;line-height:23px;font-size:14px;color:#606266;word-break:break-all">DOT</div></div><div style="position:absolute;left:635px;top:660px;width:99px;height:43px;display:flex;align-items:center;justify-content:center"><div style="text-align:center;line-height:23px;font-size:14px;color:#606266;word-break:break-all">0</div></div><div style="position:absolute;left:754px;top:660px;width:99px;height:43px;display:flex;align-items:center;justify-content:center"><div style="text-align:center;line-height:23px;font-size:14px;color:#606266;word-break:break-all">0</div></div><div style="position:absolute;left:873px;top:660px;width:99px;height:43px;display:flex;align-items:center;justify-content:center"><div style="text-align:center;line-height:23px;font-size:14px;color:#606266;word-break:break-all">0</div></div><div style="position:absolute;left:992px;top:660px;width:99px;height:43px;display:flex;align-items:center;justify-content:center"><div style="text-align:center;line-height:23px;font-size:14px;color:#606266;word-break:break-all">0</div></div><div style="position:absolute;left:1111px;top:660px;width:99px;height:43px;display:flex;align-items:center;justify-content:center"><div style="text-align:center;line-height:23px;font-size:14px;color:#606266;word-break:break-all">0</div></div><div style="position:absolute;left:1230px;top:660px;width:99px;height:43px;display:flex;align-items:center;justify-content:center"><div style="text-align:center;line-height:23px;font-size:14px;color:#606266;word-break:break-all">0</div></div><div style="position:absolute;left:1349px;top:660px;width:99px;height:43px;display:flex;align-items:center;justify-content:center"><div style="text-align:center;line-height:23px;font-size:14px;color:#606266;word-break:break-all">0</div></div><div style="position:absolute;left:1468px;top:660px;width:99px;height:43px;display:flex;align-items:center;justify-content:center"><div style="text-align:center;line-height:23px;font-size:14px;color:#606266;word-break:break-all">0</div></div><div style="position:absolute;left:1587px;top:660px;width:99px;height:43px;display:flex;align-items:center;justify-content:center"><div style="text-align:center;line-height:23px;font-size:14px;color:#606266;word-break:break-all">0</div></div><div style="position:absolute;left:1706px;top:660px;width:160px;height:43px;display:flex;align-items:center;justify-content:center"><div style="text-align:center;line-height:23px;font-size:14px;color:#606266;word-break:break-all">2022-09-06 12:56:44</div></div><div style="position:absolute;left:213px;top:704px;width:1663px;height:43px;background:#fff;border-bottom:1px solid #ebeef5"></div><div style="position:absolute;left:234px;top:719px;width:12px;height:12px;border:1px solid #dfe2e7;border-radius:1px;background:#fff"></div><div style="position:absolute;left:516px;top:704px;width:99px;height:43px;display:flex;align-items:center;justify-content:center"><div style="text-align:center;line-height:23px;font-size:14px;color:#606266;word-break:break-all">LUNA</div></div><div style="position:absolute;left:635px;top:704px;width:99px;height:43px;display:flex;align-items:center;justify-content:center"><div style="text-align:center;line-height:23px;font-size:14px;color:#606266;word-break:break-all">0</div></div><div style="position:absolute;left:754px;top:704px;width:99px;height:43px;display:flex;align-items:center;justify-content:center"><div style="text-align:center;line-height:23px;font-size:14px;color:#606266;word-break:break-all">0</div></div><div style="position:absolute;left:873px;top:704px;width:99px;height:43px;display:flex;align-items:center;justify-content:center"><div style="text-align:center;line-height:23px;font-size:14px;color:#606266;word-break:break-all">0</div></div><div style="position:absolute;left:992px;top:704px;width:99px;height:43px;display:flex;align-items:center;justify-content:center"><div style="text-align:center;line-height:23px;font-size:14px;color:#606266;word-break:break-all">0</div></div><div style="position:absolute;left:1111px;top:704px;width:99px;height:43px;display:flex;align-items:center;justify-content:center"><div style="text-align:center;line-height:23px;font-size:14px;color:#606266;word-break:break-all">0</div></div><div style="position:absolute;left:1230px;top:704px;width:99px;height:43px;display:flex;align-items:center;justify-content:center"><div style="text-align:center;line-height:23px;font-size:14px;color:#606266;word-break:break-all">0</div></div><div style="position:absolute;left:1349px;top:704px;width:99px;height:43px;display:flex;align-items:center;justify-content:center"><div style="text-align:center;line-height:23px;font-size:14px;color:#606266;word-break:break-all">0</div></div><div style="position:absolute;left:1468px;top:704px;width:99px;height:43px;display:flex;align-items:center;justify-content:center"><div style="text-align:center;line-height:23px;font-size:14px;color:#606266;word-break:break-all">0</div></div><div style="position:absolute;left:1587px;top:704px;width:99px;height:43px;display:flex;align-items:center;justify-content:center"><div style="text-align:center;line-height:23px;font-size:14px;color:#606266;word-break:break-all">0</div></div><div style="position:absolute;left:1706px;top:704px;width:160px;height:43px;display:flex;align-items:center;justify-content:center"><div style="text-align:center;line-height:23px;font-size:14px;color:#606266;word-break:break-all">2022-09-06 12:56:44</div></div><div style="position:absolute;left:213px;top:748px;width:1663px;height:43px;background:#fff;border-bottom:1px solid #ebeef5"></div><div style="position:absolute;left:234px;top:763px;width:12px;height:12px;border:1px solid #dfe2e7;border-radius:1px;background:#fff"></div><div style="position:absolute;left:516px;top:748px;width:99px;height:43px;display:flex;align-items:center;justify-content:center"><div style="text-align:center;line-height:23px;font-size:14px;color:#606266;word-break:break-all">BCH</div></div><div style="position:absolute;left:635px;top:748px;width:99px;height:43px;display:flex;align-items:center;justify-content:center"><div style="text-align:center;line-height:23px;font-size:14px;color:#606266;word-break:break-all">0</div></div><div style="position:absolute;left:754px;top:748px;width:99px;height:43px;display:flex;align-items:center;justify-content:center"><div style="text-align:center;line-height:23px;font-size:14px;color:#606266;word-break:break-all">0</div></div><div style="position:absolute;left:873px;top:748px;width:99px;height:43px;display:flex;align-items:center;justify-content:center"><div style="text-align:center;line-height:23px;font-size:14px;color:#606266;word-break:break-all">0</div></div><div style="position:absolute;left:992px;top:748px;width:99px;height:43px;display:flex;align-items:center;justify-content:center"><div style="text-align:center;line-height:23px;font-size:14px;color:#606266;word-break:break-all">0</div></div><div style="position:absolute;left:1111px;top:748px;width:99px;height:43px;display:flex;align-items:center;justify-content:center"><div style="text-align:center;line-height:23px;font-size:14px;color:#606266;word-break:break-all">0</div></div><div style="position:absolute;left:1230px;top:748px;width:99px;height:43px;display:flex;align-items:center;justify-content:center"><div style="text-align:center;line-height:23px;font-size:14px;color:#606266;word-break:break-all">0</div></div><div style="position:absolute;left:1349px;top:748px;width:99px;height:43px;display:flex;align-items:center;justify-content:center"><div style="text-align:center;line-height:23px;font-size:14px;color:#606266;word-break:break-all">0</div></div><div style="position:absolute;left:1468px;top:748px;width:99px;height:43px;display:flex;align-items:center;justify-content:center"><div style="text-align:center;line-height:23px;font-size:14px;color:#606266;word-break:break-all">0</div></div><div style="position:absolute;left:1587px;top:748px;width:99px;height:43px;display:flex;align-items:center;justify-content:center"><div style="text-align:center;line-height:23px;font-size:14px;color:#606266;word-break:break-all">0</div></div><div style="position:absolute;left:1706px;top:748px;width:160px;height:43px;display:flex;align-items:center;justify-content:center"><div style="text-align:center;line-height:23px;font-size:14px;color:#606266;word-break:break-all">2022-09-06 12:56:44</div></div><div style="position:absolute;left:1242px;top:823px;line-height:20px;font-size:13px;color:#606266;white-space:nowrap">共 3285 条</div><div style="position:absolute;left:1319px;top:819px;width:98px;height:26px;border:1px solid #dcdfe6;border-radius:3px;background:#fff"><span style="position:absolute;left:19px;top:5px;line-height:16px;font-size:13px;color:#606266">10条/页</span><svg style="position:absolute;left:81px;top:11px" width="9" height="5" viewBox="0 0 9 5"><path d="M0.6 0.6 L4.5 4.4 L8.4 0.6" fill="none" stroke="#c0c4cc" stroke-width="1"/></svg></div><div style="position:absolute;left:1439px;top:819px;width:30px;height:28px;background:#f4f4f5;border-radius:2px"><svg style="position:absolute;left:11px;top:9px" width="6" height="10" viewBox="0 0 6 10"><path d="M5 0.8 L1 5 L5 9.2" fill="none" stroke="#c0c4cc" stroke-width="1.3"/></svg></div><div style="position:absolute;left:1479px;top:819px;width:30px;height:28px;background:#1890ff;border-radius:2px"><div style="position:absolute;left:0;top:0;width:30px;line-height:28px;text-align:center;font-size:13px;font-weight:bold;color:#fff">1</div></div><div style="position:absolute;left:1519px;top:819px;width:30px;height:28px;background:#f4f4f5;border-radius:2px"><div style="position:absolute;left:0;top:0;width:30px;line-height:28px;text-align:center;font-size:13px;font-weight:bold;color:#606266">2</div></div><div style="position:absolute;left:1559px;top:819px;width:30px;height:28px;background:#f4f4f5;border-radius:2px"><div style="position:absolute;left:0;top:0;width:30px;line-height:28px;text-align:center;font-size:13px;font-weight:bold;color:#606266">3</div></div><div style="position:absolute;left:1599px;top:819px;width:30px;height:28px;background:#f4f4f5;border-radius:2px"><div style="position:absolute;left:0;top:0;width:30px;line-height:28px;text-align:center;font-size:13px;font-weight:bold;color:#606266">4</div></div><div style="position:absolute;left:1639px;top:819px;width:30px;height:28px;background:#f4f4f5;border-radius:2px"><svg style="position:absolute;left:9px;top:13px" width="12" height="3" viewBox="0 0 12 3"><circle cx="1.5" cy="1.5" r="1.3" fill="#303133"/><circle cx="6" cy="1.5" r="1.3" fill="#303133"/><circle cx="10.5" cy="1.5" r="1.3" fill="#303133"/></svg></div><div style="position:absolute;left:1679px;top:819px;width:30px;height:28px;background:#f4f4f5;border-radius:2px"><div style="position:absolute;left:0;top:0;width:30px;line-height:28px;text-align:center;font-size:13px;font-weight:bold;color:#606266">329</div></div><div style="position:absolute;left:1719px;top:819px;width:30px;height:28px;background:#f4f4f5;border-radius:2px"><svg style="position:absolute;left:13px;top:9px" width="6" height="10" viewBox="0 0 6 10"><path d="M1 0.8 L5 5 L1 9.2" fill="none" stroke="#303133" stroke-width="1.3"/></svg></div><div style="position:absolute;left:1777px;top:823px;line-height:20px;font-size:13px;color:#606266;white-space:nowrap">前往</div><div style="position:absolute;left:1808px;top:819px;width:44px;height:26px;border:1px solid #dcdfe6;border-radius:3px;background:#fff;text-align:center;line-height:26px;font-size:13px;color:#606266">1</div><div style="position:absolute;left:1857px;top:823px;line-height:20px;font-size:13px;color:#606266;white-space:nowrap">页</div><svg style="position:absolute;left:150px;top:650px;z-index:5" width="310" height="50" viewBox="0 0 310 50"><g fill="none" stroke="#1b6ef3" stroke-linecap="round" stroke-linejoin="round"><path d="M12 12 Q15 14 16 18" stroke-width="5"/><path d="M9 24 Q6 32 11 40" stroke-width="6"/><path d="M16 34 Q27 20 40 8" stroke-width="3"/><path d="M33 12 Q44 8 52 11" stroke-width="5"/><path d="M31 19 L33 37" stroke-width="6"/><path d="M31 19 L53 21 L51 37" stroke-width="6"/><path d="M28 27 Q50 24 69 26" stroke-width="5"/><path d="M33 37 L53 37" stroke-width="6"/><path d="M41 22 L42 33" stroke-width="4"/><path d="M99 16 Q93 24 87 27" stroke-width="6"/><path d="M88 28 L105 24" stroke-width="5"/><path d="M105 25 Q100 35 85 41" stroke-width="6"/><path d="M84 35 L91 35" stroke-width="2"/><path d="M117 9 Q119 26 116 43" stroke-width="7"/><path d="M121 28 Q135 29 147 31" stroke-width="5"/><path d="M165 14 L172 18" stroke-width="5"/><path d="M158 24 L168 30" stroke-width="5"/><path d="M173 25 Q170 35 161 42" stroke-width="6"/><path d="M182 11 L208 7" stroke-width="6"/><path d="M188 11 Q186 28 177 42" stroke-width="6"/><path d="M193 15 L214 19 L212 32 L193 31 Z" stroke-width="5"/><path d="M205 33 L205 44" stroke-width="5"/><path d="M196 38 Q199 43 190 44" stroke-width="3"/><path d="M210 36 L219 38" stroke-width="4"/><path d="M238 16 L258 15" stroke-width="6"/><path d="M255 16 Q245 30 231 41" stroke-width="7"/><path d="M248 30 L258 29 L258 40 L248 40 Z" stroke-width="5"/><path d="M266 10 L290 11" stroke-width="6"/><path d="M268 16 L269 31" stroke-width="5"/><path d="M267 24 L296 26" stroke-width="5"/><path d="M297 27 Q301 38 290 40 L271 39" stroke-width="6"/><path d="M263 34 L290 32" stroke-width="4"/></g></svg><div style="position:absolute;left:182px;top:693px;font-family:'Liberation Sans',sans-serif;font-weight:bold;font-size:25.7px;line-height:30px;color:#e8000f;white-space:nowrap;z-index:5">www.haiwaiym.com</div><div style="position:absolute;left:0;top:948px;width:1911px;height:3px;background:#e9eef0;z-index:7"></div><div style="position:absolute;left:193px;top:948px;width:1705px;height:1px;background:#cfd3d6;z-index:7"></div><div style="position:absolute;left:1896px;top:0;width:15px;height:951px;background:#f1f1f1;z-index:6"></div><div style="position:absolute;left:1898px;top:3px;width:13px;height:914px;background:#c1c1c1;z-index:6"></div><div style="position:absolute;left:1900.5px;top:938px;width:0;height:0;border-left:4px solid transparent;border-right:4px solid transparent;border-top:4px solid #505050;z-index:6"></div>
</body></html>
